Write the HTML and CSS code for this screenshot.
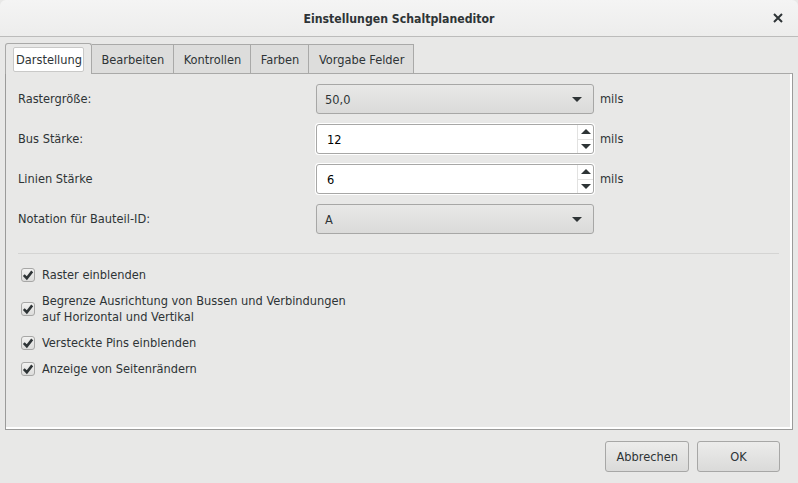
FILE: index.html
```html
<!DOCTYPE html>
<html lang="de">
<head>
    <meta charset="UTF-8">
    <title>Einstellungen Schaltplaneditor</title>
    <link rel="stylesheet" href="styles.css">
</head>
<body>
    <div class="dialog">
        <header class="titlebar">
            <span class="title">Einstellungen Schaltplaneditor</span>
            <svg class="close" width="10" height="10" viewBox="0 0 10 10">
                <path d="M1 1 L9 9 M9 1 L1 9" stroke="#2e3436" stroke-width="2" fill="none"/>
            </svg>
        </header>

        <div class="notebook">
            <div class="tabs">
                <div class="tab active"><span class="focus">Darstellung</span></div>
                <div class="tab">Bearbeiten</div>
                <div class="tab">Kontrollen</div>
                <div class="tab">Farben</div>
                <div class="tab">Vorgabe Felder</div>
            </div>

            <div class="page">
                <div class="grid">
                    <label>Rastergröße:</label>
                    <div class="combo"><span>50,0</span><i class="arrow"></i></div>
                    <span class="unit">mils</span>

                    <label>Bus Stärke:</label>
                    <div class="spin"><span class="value">12</span><span class="steps"><i class="up"></i><i class="down"></i></span></div>
                    <span class="unit">mils</span>

                    <label>Linien Stärke</label>
                    <div class="spin"><span class="value">6</span><span class="steps"><i class="up"></i><i class="down"></i></span></div>
                    <span class="unit">mils</span>

                    <label>Notation für Bauteil-ID:</label>
                    <div class="combo"><span>A</span><i class="arrow"></i></div>
                    <span class="unit"></span>
                </div>

                <hr class="sep">

                <ul class="checks">
                    <li>
                        <span class="box"><svg width="12" height="12" viewBox="0 0 12 12"><path d="M1.8 6.2 L4.8 9.2 L10.2 2.4" stroke="#2e3436" stroke-width="2.6" fill="none"/></svg></span>
                        <span>Raster einblenden</span>
                    </li>
                    <li>
                        <span class="box"><svg width="12" height="12" viewBox="0 0 12 12"><path d="M1.8 6.2 L4.8 9.2 L10.2 2.4" stroke="#2e3436" stroke-width="2.6" fill="none"/></svg></span>
                        <span>Begrenze Ausrichtung von Bussen und Verbindungen<br>auf Horizontal und Vertikal</span>
                    </li>
                    <li>
                        <span class="box"><svg width="12" height="12" viewBox="0 0 12 12"><path d="M1.8 6.2 L4.8 9.2 L10.2 2.4" stroke="#2e3436" stroke-width="2.6" fill="none"/></svg></span>
                        <span>Versteckte Pins einblenden</span>
                    </li>
                    <li>
                        <span class="box"><svg width="12" height="12" viewBox="0 0 12 12"><path d="M1.8 6.2 L4.8 9.2 L10.2 2.4" stroke="#2e3436" stroke-width="2.6" fill="none"/></svg></span>
                        <span>Anzeige von Seitenrändern</span>
                    </li>
                </ul>
            </div>
        </div>

        <footer class="actions">
            <button>Abbrechen</button>
            <button>OK</button>
        </footer>
    </div>
</body>
</html>
```

FILE: styles.css
```css
* {
    margin: 0;
    padding: 0;
    box-sizing: border-box;
}
body {
    width: 798px;
    height: 483px;
    background: #e8e8e7;
    font-family: "DejaVu Sans Condensed", "DejaVu Sans", sans-serif;
    font-stretch: condensed;
    font-size: 12.7px;
    color: #2e3436;
    overflow: hidden;
}
.dialog {
    height: 483px;
    display: flex;
    flex-direction: column;
}

/* header bar */
.titlebar {
    height: 37px;
    flex: none;
    display: flex;
    align-items: center;
    justify-content: center;
    position: relative;
    background: linear-gradient(#f4f4f4, #ededec);
    border-bottom: 1px solid #bcbcbb;
    border-top-left-radius: 6px;
    border-top-right-radius: 6px;
}
.title {
    font-weight: bold;
    font-size: 12.2px;
    padding-top: 1px;
}
.close {
    position: absolute;
    right: 15px;
    top: 13px;
}

/* notebook */
.notebook {
    margin: 6px 5px 0 5px;
    height: 387px;
    display: flex;
    flex-direction: column;
}
.tabs {
    display: flex;
    height: 31px;
    margin-bottom: -1px;
    position: relative;
}
.tab {
    height: 30px;
    margin-top: 1px;
    padding: 0 9px 0 9.5px;
    display: flex;
    align-items: center;
    background: #dddddc;
    border: 1px solid #a9a9a8;
    border-left: none;
    color: #2e3436;
}
.tab.active {
    height: 31px;
    margin-top: 0;
    padding: 0 7px;
    border-left: 1px solid #a9a9a8;
    border-bottom: none;
    background: #e8e8e7;
    border-radius: 3px 3px 0 0;
}
.focus {
    display: block;
    padding: 4px 1px 4px 2px;
    background: #fff;
    border: 1px solid #c9c9c8;
    border-radius: 2px;
}
.page {
    flex: 1;
    border: 1px solid #9b9b9a;
    border-top-color: #a9a9a8;
    box-shadow: inset -2px -2px 0 #fff;
    padding: 10px 13px 0 12px;
}

/* form rows */
.grid {
    display: grid;
    grid-template-columns: 298px 278px 1fr;
    row-gap: 10px;
    align-items: center;
}
.grid label {
    padding-bottom: 1px;
}
.unit {
    padding-left: 6px;
    padding-bottom: 1px;
}
.combo {
    height: 30px;
    display: flex;
    align-items: center;
    justify-content: space-between;
    padding: 0 11px 0 8px;
    border: 1px solid #a7a7a6;
    border-radius: 3px;
    background: linear-gradient(#e8e8e7, #dadad9);
}
.arrow {
    width: 0;
    height: 0;
    border-left: 5px solid transparent;
    border-right: 5px solid transparent;
    border-top: 5px solid #2e3436;
}
.spin {
    height: 30px;
    display: flex;
    border: 1px solid #a7a7a6;
    border-radius: 3px;
    background: #fff;
    box-shadow: 0 0 0 1px #fff;
}
.spin .value {
    flex: 1;
    display: flex;
    align-items: center;
    padding-left: 10px;
    color: #000;
}
.steps {
    width: 16px;
    display: flex;
    flex-direction: column;
    border-left: 1px solid #e2e2e1;
}
.steps i {
    flex: 1;
    display: flex;
    align-items: center;
    justify-content: center;
}
.steps i + i {
    border-top: 1px solid #e2e2e1;
}
.steps .up::before,
.steps .down::before {
    content: "";
    border-left: 5px solid transparent;
    border-right: 5px solid transparent;
}
.steps .up::before {
    border-bottom: 5px solid #2e3436;
}
.steps .down::before {
    border-top: 5px solid #2e3436;
}

.sep {
    border: none;
    border-top: 1px solid #d4d4d3;
    margin: 19px 0 0 0;
    height: 0;
}

/* checkboxes */
.checks {
    list-style: none;
    padding: 13px 0 0 3px;
    display: flex;
    flex-direction: column;
    gap: 10px;
}
.checks li {
    display: flex;
    align-items: center;
    gap: 7px;
    line-height: 16px;
}
.box {
    width: 14px;
    height: 14px;
    flex: none;
    display: flex;
    align-items: center;
    justify-content: center;
    border: 1px solid #a7a7a6;
    border-radius: 3px;
    background: linear-gradient(#f2f2f1, #dcdcdb);
}

/* dialog buttons */
.actions {
    flex: 1;
    display: flex;
    justify-content: flex-end;
    align-items: flex-start;
    gap: 8px;
    padding: 11px 18px 0 0;
}
.actions button {
    font: inherit;
    color: #2e3436;
    height: 31px;
    min-width: 83px;
    padding: 0 10px;
    border: 1px solid #a7a7a6;
    border-radius: 3px;
    background: linear-gradient(#ececeb, #dadad9);
}
```
